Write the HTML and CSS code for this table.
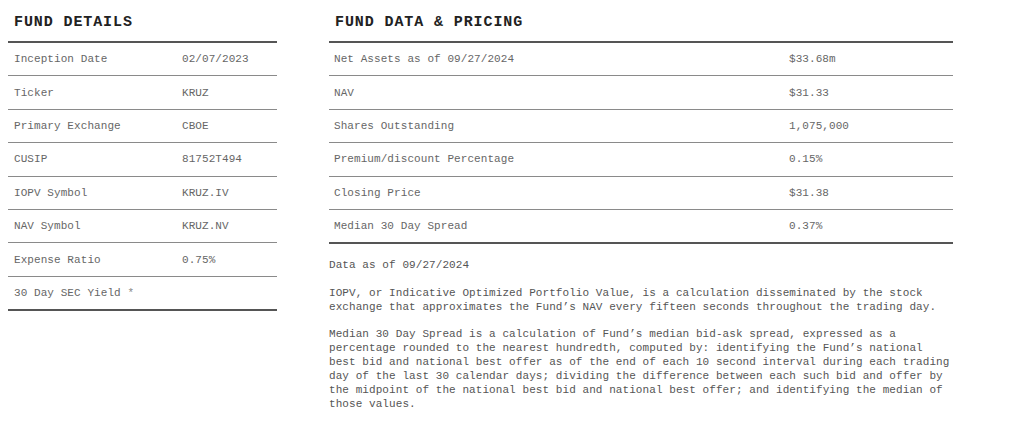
FILE: index.html
```html
<!DOCTYPE html>
<html lang="en">
<head>
<meta charset="utf-8">
<title>Fund Details</title>
<link rel="stylesheet" href="styles.css">
</head>
<body>
<div class="page">
  <section class="col col-details">
    <h2 class="title">FUND DETAILS</h2>
    <div class="table">
      <div class="row"><span class="label">Inception Date</span><span class="value">02/07/2023</span></div>
      <div class="row"><span class="label">Ticker</span><span class="value">KRUZ</span></div>
      <div class="row"><span class="label">Primary Exchange</span><span class="value">CBOE</span></div>
      <div class="row"><span class="label">CUSIP</span><span class="value">81752T494</span></div>
      <div class="row"><span class="label">IOPV Symbol</span><span class="value">KRUZ.IV</span></div>
      <div class="row"><span class="label">NAV Symbol</span><span class="value">KRUZ.NV</span></div>
      <div class="row"><span class="label">Expense Ratio</span><span class="value">0.75%</span></div>
      <div class="row"><span class="label">30 Day SEC Yield <span class="star">*</span></span><span class="value"></span></div>
    </div>
  </section>
  <section class="col col-pricing">
    <h2 class="title">FUND DATA &amp; PRICING</h2>
    <div class="table">
      <div class="row"><span class="label">Net Assets as of 09/27/2024</span><span class="value">$33.68m</span></div>
      <div class="row"><span class="label">NAV</span><span class="value">$31.33</span></div>
      <div class="row"><span class="label">Shares Outstanding</span><span class="value">1,075,000</span></div>
      <div class="row"><span class="label">Premium/discount Percentage</span><span class="value">0.15%</span></div>
      <div class="row"><span class="label">Closing Price</span><span class="value">$31.38</span></div>
      <div class="row"><span class="label">Median 30 Day Spread</span><span class="value">0.37%</span></div>
    </div>
    <div class="notes">
      <p>Data as of 09/27/2024</p>
      <p>IOPV, or Indicative Optimized Portfolio Value, is a calculation disseminated by the stock exchange that approximates the Fund’s NAV every fifteen seconds throughout the trading day.</p>
      <p>Median 30 Day Spread is a calculation of Fund’s median bid-ask spread, expressed as a percentage rounded to the nearest hundredth, computed by: identifying the Fund’s national best bid and national best offer as of the end of each 10 second interval during each trading day of the last 30 calendar days; dividing the difference between each such bid and offer by the midpoint of the national best bid and national best offer; and identifying the median of those values.</p>
    </div>
  </section>
</div>
</body>
</html>
```

FILE: styles.css
```css
html, body {
  margin: 0;
  padding: 0;
  background: #ffffff;
}

body {
  padding: 8px;
  font-family: "Liberation Mono", "DejaVu Sans Mono", monospace;
  font-size: 11px;
  color: #666666;
}

.page {
  display: flex;
  align-items: flex-start;
  gap: 52px;
}

.col-details {
  width: 269px;
  flex: none;
}

.col-pricing {
  width: 624px;
  flex: none;
}

.title {
  margin: 0 0 3px 0;
  padding-left: 6px;
  font-family: "Liberation Mono", "DejaVu Sans Mono", monospace;
  font-size: 15px;
  font-weight: bold;
  letter-spacing: 0.9px;
  line-height: 30px;
  color: #222222;
}

.table {
  border-top: 2px solid #555555;
}

.row {
  display: flex;
  align-items: center;
  height: 32.4px;
  border-bottom: 1px solid #8a8a8a;
  letter-spacing: 0.07px;
}

.row:last-child {
  border-bottom: 2px solid #555555;
}

.label {
  padding-left: 6px;
  flex: none;
}

.col-details .label {
  width: 168px;
}

.col-pricing .label {
  padding-left: 5px;
  width: 455px;
}

.value {
  flex: 1;
}

.star {
  color: #888888;
}

.notes {
  margin-top: 14px;
  color: #555555;
  line-height: 14px;
  letter-spacing: 0.07px;
}

.notes p {
  margin: 0 0 13.5px 0;
}
```
